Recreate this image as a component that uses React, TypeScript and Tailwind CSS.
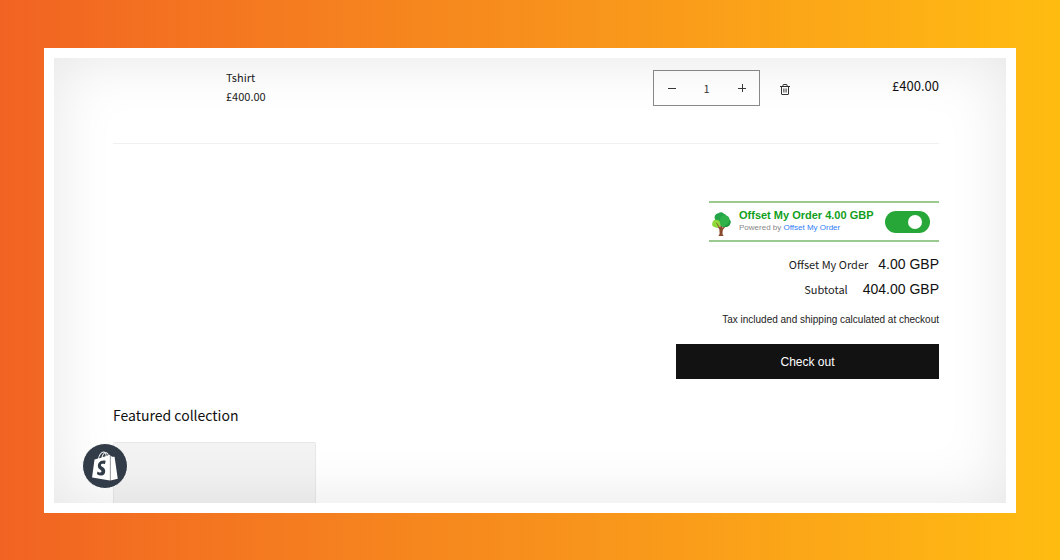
import { useState } from "react"
import { FaShopify } from "react-icons/fa"

const TreeIcon = () => (
  <svg className="mt-1 h-6 w-[19px] shrink-0" viewBox="0 0 19 24" aria-hidden="true">
    <path d="M6 24c1.200-.6 1.600-1.500 1.600-3L7.300 17 4 13l1-.8 3.200 3L9 9h1.300l.2 7 3.500-4 .8.8-4 5.200-.3 3c0 1.500.4 2.400 1.500 3z" fill="#8b4a2b" />
    <path d="M2.500 5.500C2.700 2.500 5 1.500 6.500 1.300 8-.3 10.500-.2 11.800 1.700c1.700.3 2.700 1.500 2.700 3.300L10 12 3.500 9z" fill="#23a548" />
    <path d="M8.500 6.500c.5-2.500 3-3.700 5-3 2.500 0 4 1.800 4 3.800 1.500 1.500 1.500 4 .3 5.200-.8 2-3.300 2.900-5.300 2.300-2 .5-4-.5-4.500-2.300-1.500-1.500-1-4.500.5-6z" fill="#2fb24a" />
    <path d="M11 14.800c2 .6 6.300.2 7-2.800.8-1.500.7-3-.3-4.200-.3 3-3 5.700-6.700 7z" fill="#1f9a41" />
    <path d="M1 9.500c.5-1.700 2.500-2.300 4-1.500 1.800 0 3 1.300 3 3 .8 1.500.3 3.300-1 4-1.500 1.200-3.500 1-4.500 0C.5 14.500-.3 13 .3 11.500c-.1-.8.200-1.500.7-2z" fill="#8fd93a" />
    <path d="M4.200 11l.5-.3L8 16l-.3 1.500z" fill="#8b4a2b" />
  </svg>
)

const TrashIcon = () => (
  <svg className="h-[11px] w-[10px]" viewBox="0 0 10 11" fill="none" stroke="currentColor" aria-hidden="true">
    <path d="M0 2.500h10M3 2.500v-1.500q0-.5.5-.5h3q.5 0 .5.500v1.500M1.500 2.500v7.500q0 .5.5.5h6q.5 0 .5-.5v-7.500M3.900 4.500v4M6.100 4.500v4" strokeWidth="1" />
  </svg>
)

const QuantityPicker = () => {
  const [quantity, setQuantity] = useState("1")
  const step = (by: number) => setQuantity(String(Math.max(1, (Number(quantity) || 1) + by)))

  return (
    <div className="flex h-9 w-[107px] shrink-0 border border-[#8a8a8a] text-[#3a3a3a]">
      <button type="button" aria-label="Decrease quantity" onClick={() => step(-1)} className="flex w-[35px] items-center justify-center">
        <svg className="h-2 w-2" viewBox="0 0 8 8" stroke="currentColor"><path d="M0 4.500h8" /></svg>
      </button>
      <input
        aria-label="Quantity"
        value={quantity}
        onChange={(e) => setQuantity(e.target.value)}
        className="w-0 min-w-0 flex-1 bg-transparent text-center text-[11px] outline-none"
      />
      <button type="button" aria-label="Increase quantity" onClick={() => step(1)} className="flex w-[35px] items-center justify-center">
        <svg className="h-2 w-2" viewBox="0 0 8 8" stroke="currentColor"><path d="M0 4.500h8M4.500 0v8" /></svg>
      </button>
    </div>
  )
}

const CartItem = () => (
  <div className="flex items-start border-b border-[#f0f0f0] pb-[37px]">
    <div className="flex-1 pl-[113px] text-[11px] leading-[14px] text-[#222]">
      <h3>Tshirt</h3>
      <p className="mt-[5px]">£400.00</p>
    </div>
    <QuantityPicker />
    <button type="button" aria-label="Remove Tshirt" className="ml-4 flex h-9 w-[18px] items-center justify-center pt-[2px] text-[#333]">
      <TrashIcon />
    </button>
    <p className="w-[145px] pt-[6px] text-right text-[13px] leading-5 text-[#111]">£400.00</p>
  </div>
)

const OffsetWidget = () => {
  const [enabled, setEnabled] = useState(true)

  return (
    <div className="flex h-[41px] w-[230px] items-center border-y-2 border-[#9aca90] pr-[9px] pl-[3px] font-['Liberation_Sans',sans-serif]">
      <TreeIcon />
      <div className="mb-[2px] ml-2 flex-1 whitespace-nowrap">
        <label htmlFor="offset-order" className="block text-[11px] leading-[14px] font-bold text-[#12a01c]">
          Offset My Order 4.00 GBP
        </label>
        <p className="text-[8px] leading-[11px] text-[#888]">
          Powered by <a href="#offset" className="text-[#2f7cf6]">Offset My Order</a>
        </p>
      </div>
      <input
        id="offset-order"
        type="checkbox"
        role="switch"
        checked={enabled}
        onChange={(e) => setEnabled(e.target.checked)}
        className="flex h-[22px] w-[45px] shrink-0 cursor-pointer appearance-none items-center rounded-full bg-gray-300 px-2 before:size-[14px] before:rounded-full before:bg-white checked:justify-end checked:bg-[#27a737]"
      />
    </div>
  )
}

const totals = [
  { label: "Offset My Order", amount: "4.00 GBP", gap: "gap-[10px]" },
  { label: "Subtotal", amount: "404.00 GBP", gap: "gap-[15px]" },
]

export default function App() {
  return (
    <div className="flex min-h-screen bg-linear-to-r from-[#f16322] via-[#f78f1c] to-[#ffbc10] px-11 pt-12 pb-[47px] font-['Noto_Sans_CJK_SC','Noto_Sans',sans-serif]">
      <div className="relative flex flex-1 flex-col border-[10px] border-white bg-white">
        <main className="flex flex-1 flex-col pt-3 pr-[67px] pl-[59px]">
          <CartItem />

          <section className="mt-[57px] flex flex-col items-end text-[#111]">
            <OffsetWidget />
            <dl className="mt-[10px] w-full">
              {totals.map(({ label, amount, gap }) => (
                <div key={label} className={`flex h-[25px] items-center justify-end ${gap}`}>
                  <dt className="text-[11px] text-[#222]">{label}</dt>
                  <dd className="font-['Liberation_Sans',sans-serif] text-[14px]">{amount}</dd>
                </div>
              ))}
            </dl>
            <p className="mt-[10px] font-['Liberation_Sans',sans-serif] text-[10px] leading-4 text-[#222]">
              Tax included and shipping calculated at checkout
            </p>
            <button type="button" className="mt-4 h-[35px] w-[263px] bg-[#121212] font-['Liberation_Sans',sans-serif] text-[12px] text-white">
              Check out
            </button>
          </section>

          <section className="mt-6 flex flex-1 flex-col">
            <h2 className="text-[14px] leading-6 text-[#111]">Featured collection</h2>
            <div className="mt-[15px] min-h-[60px] w-[203px] flex-1 rounded-t-[2px] border border-b-0 border-[#e8e8e8] bg-[#f3f3f3]" />
          </section>
        </main>

        {/* Vignette over the whole store page */}
        <div className="pointer-events-none absolute inset-0 shadow-[inset_0_0_60px_rgba(0,0,0,0.1)]" />

        <a
          href="#shopify"
          aria-label="Shopify"
          className="absolute bottom-[14px] left-7 flex size-[46px] items-center justify-center rounded-full border border-white bg-[#323c48] text-white"
        >
          <FaShopify className="size-[30px]" />
        </a>
      </div>
    </div>
  )
}
